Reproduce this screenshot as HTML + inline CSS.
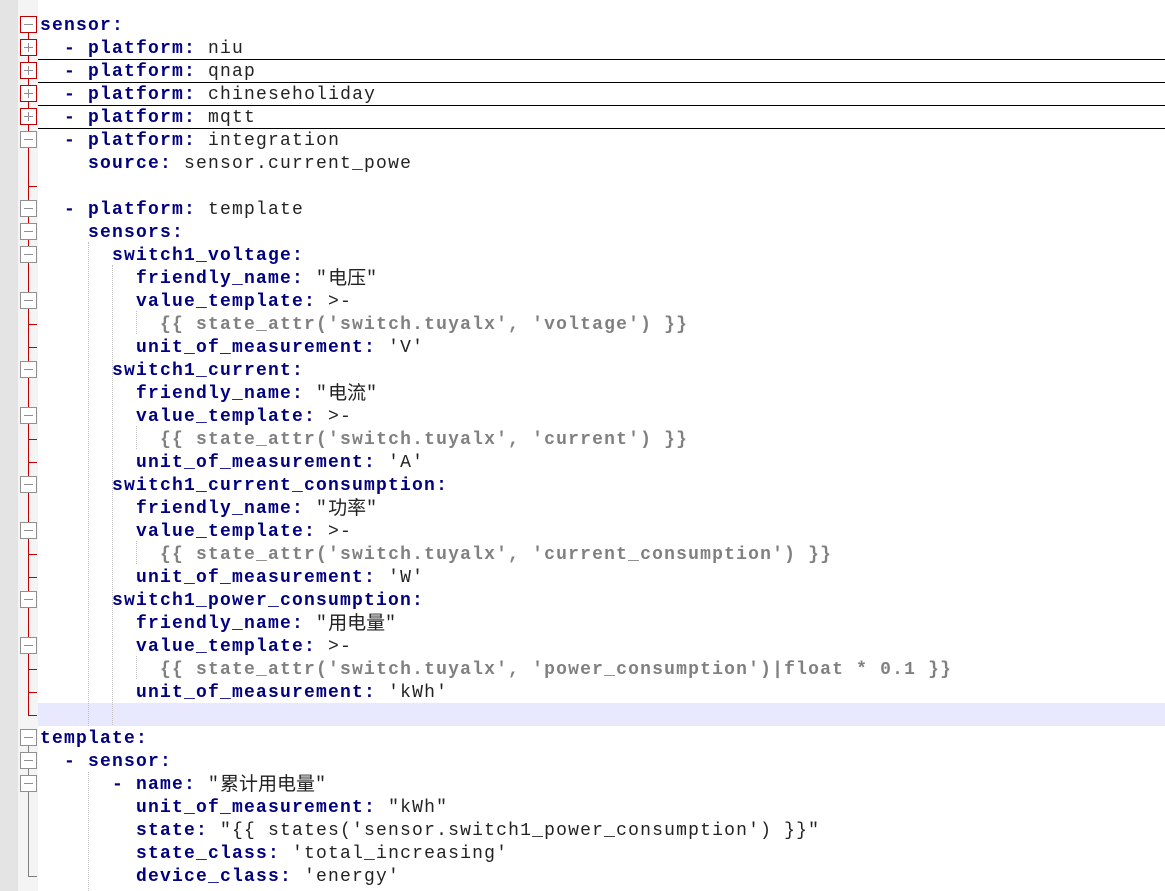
<!DOCTYPE html>
<html><head><meta charset="utf-8"><style>
body{margin:0;width:1165px;height:891px;overflow:hidden;background:#fff;position:relative;font-family:"Liberation Mono","Noto Sans CJK SC",monospace;}
#g1{position:absolute;left:0;top:0;width:18px;height:891px;background:#e4e4e4;}
#g2{position:absolute;left:18px;top:0;width:20px;height:891px;background:#f4f4f4;}
.l{position:absolute;left:40px;height:23px;line-height:23px;white-space:pre;font-size:18px;letter-spacing:1.2px;color:#222;padding-top:2px;}
.k{color:#000080;font-weight:bold}
.t{color:#808080;font-weight:bold}
.c{font-family:"Noto Sans CJK SC",sans-serif;letter-spacing:0;font-size:19px;display:inline-block;height:23px;line-height:23px;vertical-align:top;position:relative;top:-3px}
.b{position:absolute;left:20px;width:15px;height:15px;border:1px solid #909090;background:#fff;}
.b::before{content:"";position:absolute;left:3px;right:3px;top:7px;height:1px;background:#909090}
.p::after{content:"";position:absolute;top:3px;bottom:3px;left:7px;width:1px;background:#909090}
.r{border-color:#c00000}
.hl{position:absolute;left:38px;width:1127px;height:23px;background:#e8e8ff}
.sep{position:absolute;left:38px;width:1127px;height:1px;background:#000}
.v{position:absolute;width:1px}
.tk{position:absolute;left:28px;width:9px;height:1px}
.ig{position:absolute;width:0;border-left:1px dotted #c0c0c0}
</style></head><body>
<div id="g1"></div><div id="g2"></div>
<div class="hl" style="top:703px"></div>
<div class="sep" style="top:59px"></div><div class="sep" style="top:82px"></div><div class="sep" style="top:105px"></div><div class="sep" style="top:128px"></div>
<div class="v" style="left:28px;top:24px;height:692px;background:#c00000"></div>
<div class="tk" style="top:715px;background:#c00000"></div>
<div class="v" style="left:28px;top:738px;height:138px;background:#808080"></div>
<div class="tk" style="top:876px;background:#808080"></div>
<div class="tk" style="top:186px;background:#c00000"></div>
<div class="tk" style="top:324px;background:#c00000"></div>
<div class="tk" style="top:347px;background:#c00000"></div>
<div class="tk" style="top:439px;background:#c00000"></div>
<div class="tk" style="top:462px;background:#c00000"></div>
<div class="tk" style="top:554px;background:#c00000"></div>
<div class="tk" style="top:577px;background:#c00000"></div>
<div class="tk" style="top:669px;background:#c00000"></div>
<div class="tk" style="top:692px;background:#c00000"></div>
<div class="ig" style="left:88px;top:242px;height:484px"></div>
<div class="ig" style="left:112px;top:265px;height:460px"></div>
<div class="ig" style="left:136px;top:311px;height:23px"></div>
<div class="ig" style="left:136px;top:426px;height:23px"></div>
<div class="ig" style="left:136px;top:541px;height:23px"></div>
<div class="ig" style="left:136px;top:656px;height:23px"></div>
<div class="ig" style="left:88px;top:772px;height:119px"></div>

<div class="b r" style="top:16px"></div>
<div class="b p r" style="top:39px"></div>
<div class="b p r" style="top:62px"></div>
<div class="b p r" style="top:85px"></div>
<div class="b p r" style="top:108px"></div>
<div class="b" style="top:131px"></div>
<div class="b" style="top:200px"></div>
<div class="b" style="top:223px"></div>
<div class="b" style="top:246px"></div>
<div class="b" style="top:292px"></div>
<div class="b" style="top:361px"></div>
<div class="b" style="top:407px"></div>
<div class="b" style="top:476px"></div>
<div class="b" style="top:522px"></div>
<div class="b" style="top:591px"></div>
<div class="b" style="top:637px"></div>
<div class="b" style="top:729px"></div>
<div class="b" style="top:752px"></div>
<div class="b" style="top:775px"></div>

<div class="l" style="top:13px"><span class="k">sensor:</span></div>
<div class="l" style="top:36px">  <span class="k">- platform:</span> niu</div>
<div class="l" style="top:59px">  <span class="k">- platform:</span> qnap</div>
<div class="l" style="top:82px">  <span class="k">- platform:</span> chineseholiday</div>
<div class="l" style="top:105px">  <span class="k">- platform:</span> mqtt</div>
<div class="l" style="top:128px">  <span class="k">- platform:</span> integration</div>
<div class="l" style="top:151px">    <span class="k">source:</span> sensor.current_powe</div>
<div class="l" style="top:197px">  <span class="k">- platform:</span> template</div>
<div class="l" style="top:220px">    <span class="k">sensors:</span></div>
<div class="l" style="top:243px">      <span class="k">switch1_voltage:</span></div>
<div class="l" style="top:266px">        <span class="k">friendly_name:</span> "<span class="c">电压</span>"</div>
<div class="l" style="top:289px">        <span class="k">value_template:</span> &gt;-</div>
<div class="l" style="top:312px">          <span class="t">{{ state_attr('switch.tuyalx', 'voltage') }}</span></div>
<div class="l" style="top:335px">        <span class="k">unit_of_measurement:</span> 'V'</div>
<div class="l" style="top:358px">      <span class="k">switch1_current:</span></div>
<div class="l" style="top:381px">        <span class="k">friendly_name:</span> "<span class="c">电流</span>"</div>
<div class="l" style="top:404px">        <span class="k">value_template:</span> &gt;-</div>
<div class="l" style="top:427px">          <span class="t">{{ state_attr('switch.tuyalx', 'current') }}</span></div>
<div class="l" style="top:450px">        <span class="k">unit_of_measurement:</span> 'A'</div>
<div class="l" style="top:473px">      <span class="k">switch1_current_consumption:</span></div>
<div class="l" style="top:496px">        <span class="k">friendly_name:</span> "<span class="c">功率</span>"</div>
<div class="l" style="top:519px">        <span class="k">value_template:</span> &gt;-</div>
<div class="l" style="top:542px">          <span class="t">{{ state_attr('switch.tuyalx', 'current_consumption') }}</span></div>
<div class="l" style="top:565px">        <span class="k">unit_of_measurement:</span> 'W'</div>
<div class="l" style="top:588px">      <span class="k">switch1_power_consumption:</span></div>
<div class="l" style="top:611px">        <span class="k">friendly_name:</span> "<span class="c">用电量</span>"</div>
<div class="l" style="top:634px">        <span class="k">value_template:</span> &gt;-</div>
<div class="l" style="top:657px">          <span class="t">{{ state_attr('switch.tuyalx', 'power_consumption')|float * 0.1 }}</span></div>
<div class="l" style="top:680px">        <span class="k">unit_of_measurement:</span> 'kWh'</div>
<div class="l" style="top:726px"><span class="k">template:</span></div>
<div class="l" style="top:749px">  <span class="k">- sensor:</span></div>
<div class="l" style="top:772px">      <span class="k">- name:</span> "<span class="c">累计用电量</span>"</div>
<div class="l" style="top:795px">        <span class="k">unit_of_measurement:</span> "kWh"</div>
<div class="l" style="top:818px">        <span class="k">state:</span> "{{ states('sensor.switch1_power_consumption') }}"</div>
<div class="l" style="top:841px">        <span class="k">state_class:</span> 'total_increasing'</div>
<div class="l" style="top:864px">        <span class="k">device_class:</span> 'energy'</div>
</body></html>
